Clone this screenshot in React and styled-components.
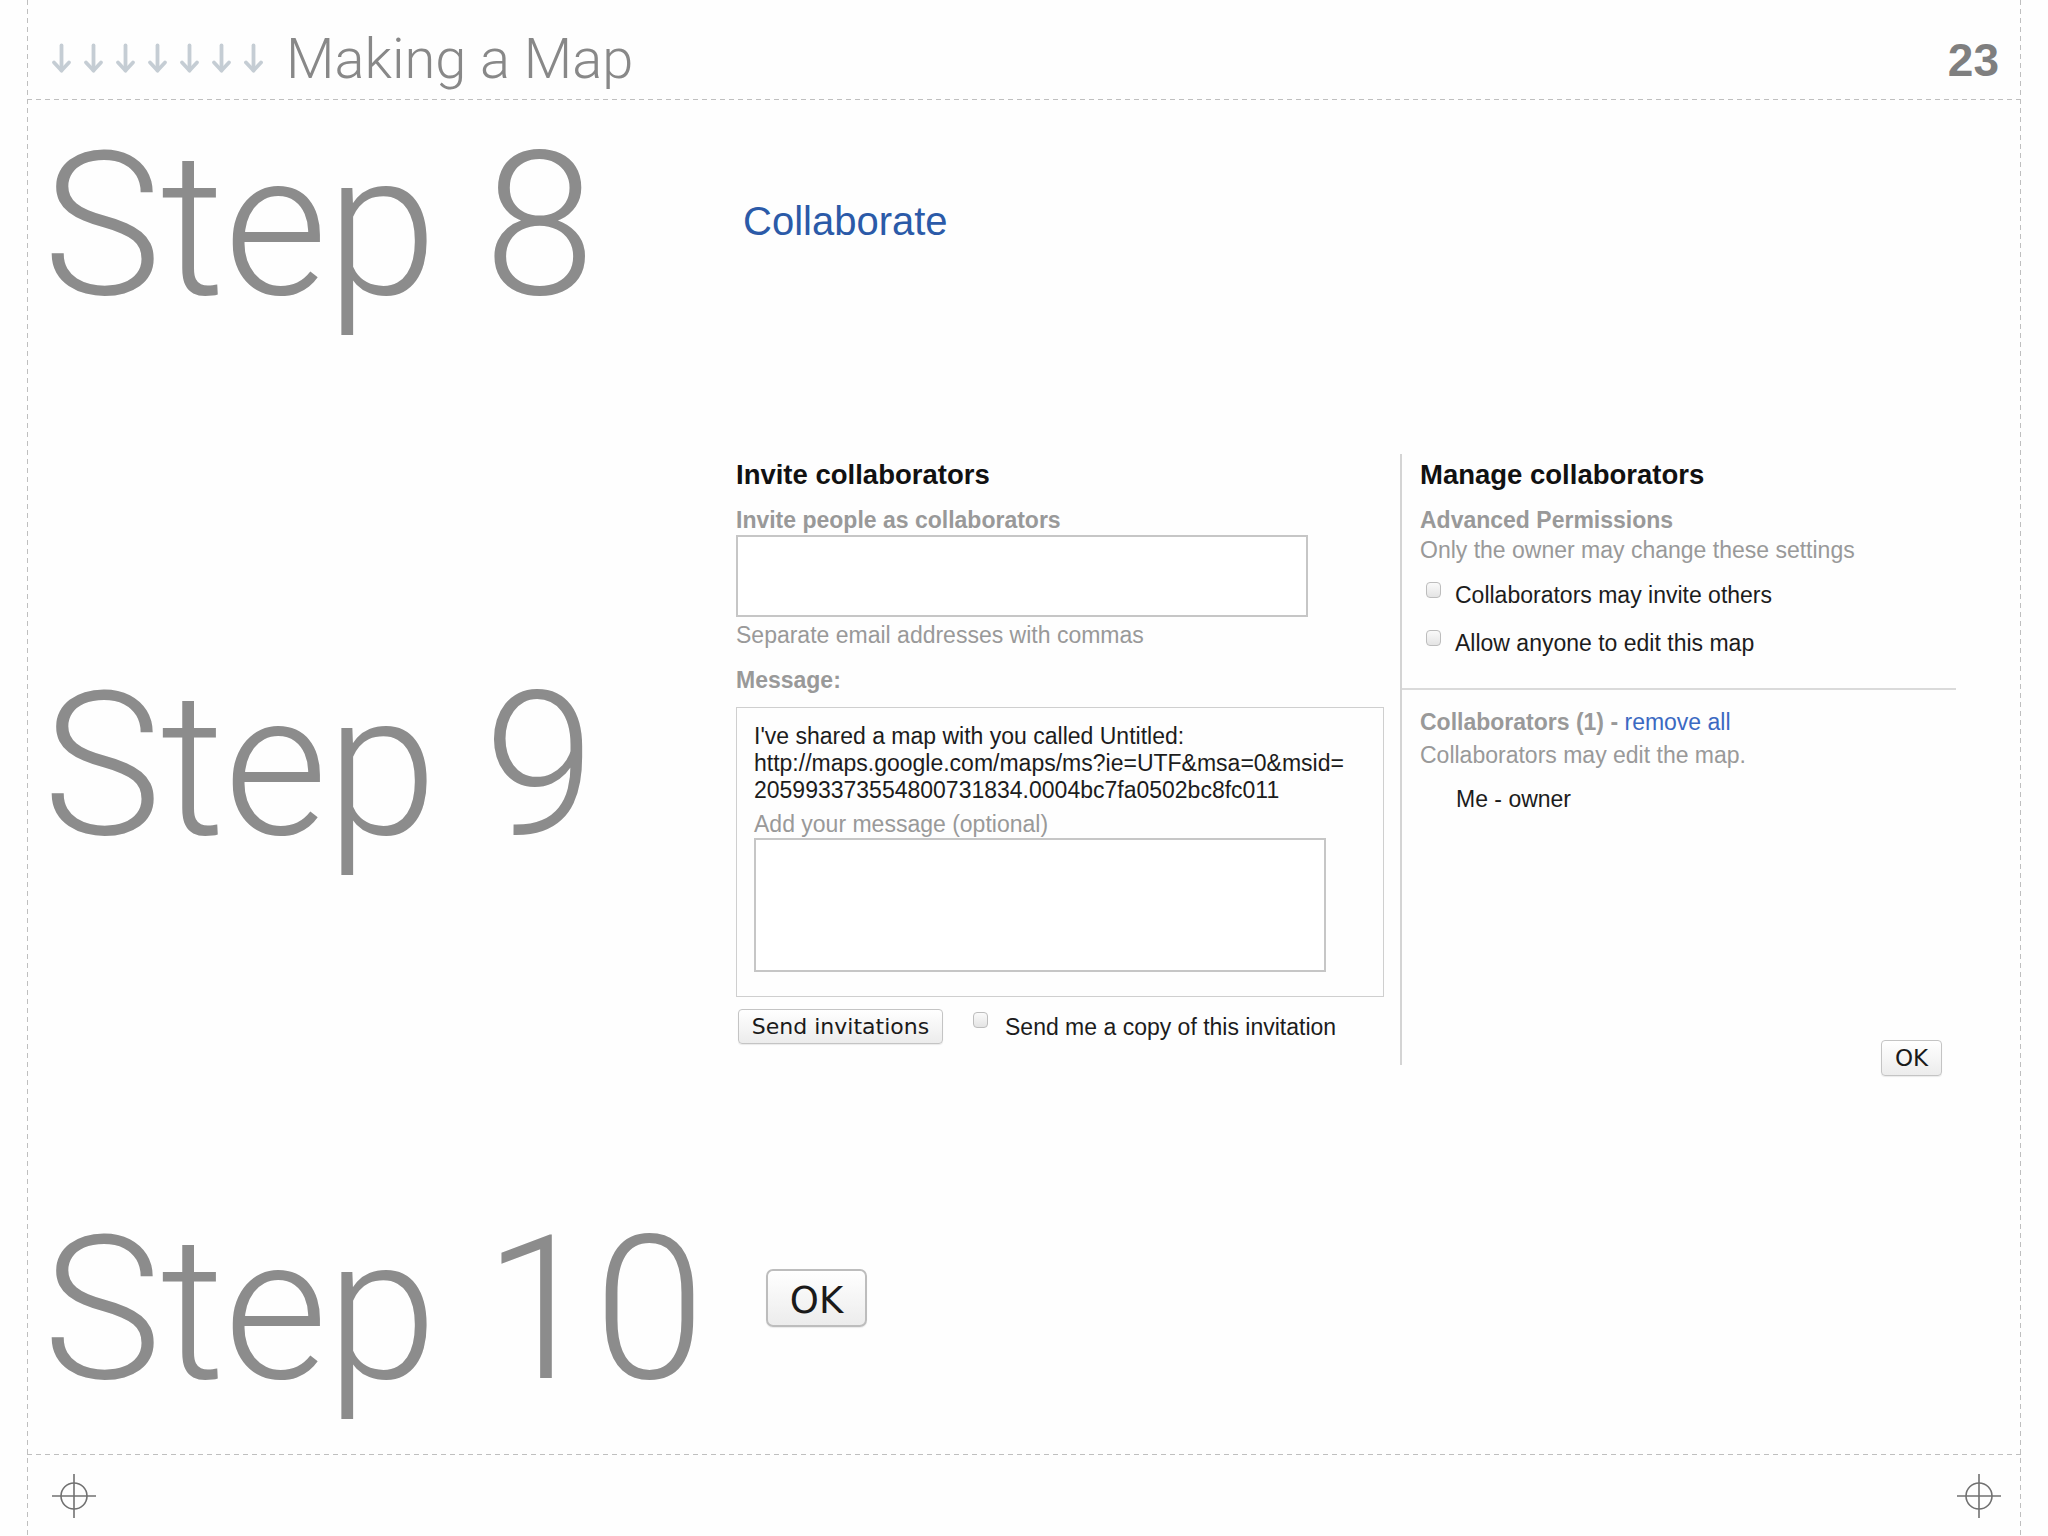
import React from "react";
import styled, { createGlobalStyle } from "styled-components";

const GlobalStyle = createGlobalStyle`
  html, body {
    margin: 0;
    padding: 0;
    background: #fefefe;
  }
  * {
    box-sizing: border-box;
  }
`;

const dashV = "repeating-linear-gradient(to bottom, #bfbfbf 0 5px, transparent 5px 9px)";
const dashH = "repeating-linear-gradient(to right, #bfbfbf 0 5px, transparent 5px 9px)";

const Page = styled.div`
  width: 2048px;
  height: 1536px;
  padding-left: 27px;
  background: #fefefe;
  overflow: hidden;
`;

const Frame = styled.div`
  width: 1994px;
  height: 100%;
  display: flex;
  flex-direction: column;
  background:
    ${dashV} left top / 1px 100% no-repeat,
    ${dashV} right top / 1px 100% no-repeat;
`;

const Header = styled.header`
  height: 100px;
  flex: none;
  display: flex;
  align-items: flex-end;
  padding: 0 22px 13px 24px;
  background: ${dashH} left bottom / 100% 1px no-repeat;
`;

const Arrows = styled.div`
  display: flex;
  gap: 11px;
  margin-bottom: 13px;
`;

const Title = styled.h1`
  margin: 0 0 0 22px;
  font-family: Roboto, "Open Sans", sans-serif;
  font-weight: 300;
  font-size: 56px;
  line-height: 1;
  color: #888888;
`;

const PageNum = styled.div`
  margin: 0 0 4px auto;
  font-family: "Liberation Sans", Arial, sans-serif;
  font-weight: 700;
  font-size: 46px;
  line-height: 1;
  color: #7f7f7f;
`;

const Body = styled.main`
  flex: none;
  height: 1355px;
  display: flex;
  flex-direction: column;
  padding-left: 12px;
  background: ${dashH} left bottom / 100% 1px no-repeat;
`;

const Row = styled.section`
  display: flex;
  align-items: flex-start;
  height: ${(p) => p.h}px;
  flex: none;
`;

const StepLabel = styled.div`
  width: 697px;
  flex: none;
  padding-left: 4px;
  margin-top: ${(p) => p.top}px;
  font-family: Roboto, "Open Sans", sans-serif;
  font-weight: 300;
  font-size: 200px;
  line-height: 1;
  letter-spacing: -1px;
  color: #8c8c8c;
  white-space: nowrap;
`;

const Collaborate = styled.h2`
  margin: 101px 0 0 7px;
  font-family: "Liberation Sans", Arial, sans-serif;
  font-weight: 400;
  font-size: 40px;
  line-height: 1;
  color: #2b5aa8;
`;

const Dialog = styled.div`
  margin-top: 14px;
  display: flex;
  align-items: flex-start;
  font-family: "Liberation Sans", Arial, sans-serif;
  font-size: 23px;
  line-height: 28px;
  color: #1c1c1c;
`;

const LeftPane = styled.div`
  width: 648px;
  padding-top: 5px;
  display: flex;
  flex-direction: column;
`;

const RightPane = styled.div`
  width: 556px;
  height: 611px;
  margin-left: 16px;
  border-left: 2px solid #d4d4d4;
  display: flex;
  flex-direction: column;
`;

const PaneSection = styled.div`
  padding-left: 18px;
  padding-top: ${(p) => p.top || 0}px;
  display: flex;
  flex-direction: column;
`;

const Heading = styled.h3`
  margin: 0;
  font-size: 27.5px;
  line-height: 32px;
  font-weight: 700;
  color: #111;
`;

const Label = styled.div`
  margin-top: ${(p) => p.top || 0}px;
  font-weight: ${(p) => (p.bold ? 700 : 400)};
  color: ${(p) => (p.dark ? "#1c1c1c" : "#999999")};
  padding-left: ${(p) => p.indent || 0}px;
  white-space: nowrap;
`;

const LinkText = styled.span`
  font-weight: 400;
  color: #3b69c2;
`;

const Field = styled.div`
  margin-top: ${(p) => p.top || 0}px;
  width: ${(p) => p.w}px;
  height: ${(p) => p.h}px;
  border: 2px solid #c6c6c6;
  background: #fff;
`;

const MessageBox = styled.div`
  margin-top: 13px;
  width: 648px;
  height: 290px;
  border: 1px solid #cfcfcf;
  padding: 15px 0 0 17px;
  display: flex;
  flex-direction: column;
`;

const MessageText = styled.div`
  line-height: 27px;
  color: #1c1c1c;
  white-space: pre;
`;

const ButtonRow = styled.div`
  margin-top: 12px;
  display: flex;
  align-items: center;
`;

const Button = styled.button`
  margin-left: ${(p) => p.ml || 0}px;
  width: ${(p) => p.w}px;
  height: ${(p) => p.h}px;
  padding: 0;
  border: 1px solid #c4c4c4;
  border-radius: 4px;
  background: linear-gradient(to bottom, #ffffff, #ececec);
  box-shadow: 0 1px 1px rgba(0, 0, 0, 0.08);
  font-family: "DejaVu Sans", Verdana, sans-serif;
  font-size: ${(p) => p.fs}px;
  color: #1a1a1a;
  display: flex;
  align-items: center;
  justify-content: center;
`;

const BigButton = styled(Button)`
  border: 2px solid #bdbdbd;
  border-radius: 7px;
  margin-top: 179px;
  padding-top: 4px;
`;

const Checkbox = styled.span`
  flex: none;
  display: inline-block;
  width: 15px;
  height: 16px;
  margin-left: ${(p) => p.ml || 0}px;
  margin-right: ${(p) => p.mr || 0}px;
  border: 1px solid #bdbdbd;
  border-radius: 4px;
  background: linear-gradient(to bottom, #fafafa, #e4e4e4);
  align-self: flex-start;
  margin-top: ${(p) => p.mt || 0}px;
`;

const CheckRow = styled.div`
  margin-top: ${(p) => p.top || 0}px;
  display: flex;
  align-items: center;
  color: #1c1c1c;
  white-space: nowrap;
`;

const Divider = styled.div`
  margin-top: 31px;
  height: 2px;
  background: #dadada;
`;

const OkBar = styled.div`
  margin-top: auto;
  margin-bottom: -11px;
  padding-right: 14px;
  display: flex;
  justify-content: flex-end;
`;

const Footer = styled.footer`
  flex: 1;
  display: flex;
  justify-content: space-between;
  align-items: flex-start;
  padding: 18px 19px 0 24px;
`;

function Arrow() {
  return (
    <svg width="21" height="31" viewBox="0 0 21 31">
      <g stroke="#c5cdd4" strokeWidth="3.8" strokeLinecap="round" strokeLinejoin="round" fill="none">
        <line x1="10.5" y1="2.5" x2="10.5" y2="27.5" />
        <polyline points="3,19.5 10.5,27.5 18,19.5" />
      </g>
    </svg>
  );
}

function Crosshair() {
  return (
    <svg width="46" height="46" viewBox="0 0 46 46">
      <g stroke="#717171" strokeWidth="1.6" fill="none">
        <circle cx="23" cy="23" r="13" />
        <line x1="1" y1="23" x2="45" y2="23" />
        <line x1="23" y1="1" x2="23" y2="45" />
      </g>
    </svg>
  );
}

const message = [
  "I've shared a map with you called Untitled:",
  "http://maps.google.com/maps/ms?ie=UTF&msa=0&msid=",
  "205993373554800731834.0004bc7fa0502bc8fc011",
];

export default function App() {
  return (
    <Page>
      <GlobalStyle />
      <Frame>
        <Header>
          <Arrows>
            {Array.from({ length: 7 }).map((_, i) => (
              <Arrow key={i} />
            ))}
          </Arrows>
          <Title>Making a Map</Title>
          <PageNum>23</PageNum>
        </Header>

        <Body>
          <Row h={340}>
            <StepLabel top={26}>Step 8</StepLabel>
            <Collaborate>Collaborate</Collaborate>
          </Row>

          <Row h={650}>
            <StepLabel top={226}>Step 9</StepLabel>
            <Dialog>
              <LeftPane>
                <Heading>Invite collaborators</Heading>
                <Label bold top={15}>Invite people as collaborators</Label>
                <Field w={572} h={82} top={1} />
                <Label top={4}>Separate email addresses with commas</Label>
                <Label bold top={17}>Message:</Label>
                <MessageBox>
                  <MessageText>{message.join("\n")}</MessageText>
                  <Label top={6}>Add your message (optional)</Label>
                  <Field w={572} h={134} />
                </MessageBox>
                <ButtonRow>
                  <Button ml={2} w={205} h={35} fs={22}>Send invitations</Button>
                  <Checkbox ml={30} mr={17} mt={3} />
                  <Label dark>Send me a copy of this invitation</Label>
                </ButtonRow>
              </LeftPane>

              <RightPane>
                <PaneSection top={5}>
                  <Heading>Manage collaborators</Heading>
                  <Label bold top={15}>Advanced Permissions</Label>
                  <Label top={2}>Only the owner may change these settings</Label>
                  <CheckRow top={17}>
                    <Checkbox ml={6} mr={14} mt={1} />
                    Collaborators may invite others
                  </CheckRow>
                  <CheckRow top={20}>
                    <Checkbox ml={6} mr={14} mt={1} />
                    Allow anyone to edit this map
                  </CheckRow>
                </PaneSection>
                <Divider />
                <PaneSection top={18}>
                  <Label bold>
                    Collaborators (1) - <LinkText>remove all</LinkText>
                  </Label>
                  <Label top={5}>Collaborators may edit the map.</Label>
                  <Label dark top={16} indent={36}>Me - owner</Label>
                </PaneSection>
                <OkBar>
                  <Button w={61} h={36} fs={23}>OK</Button>
                </OkBar>
              </RightPane>
            </Dialog>
          </Row>

          <Row h={365}>
            <StepLabel top={120}>Step 10</StepLabel>
            <BigButton ml={30} w={101} h={58} fs={37}>OK</BigButton>
          </Row>
        </Body>

        <Footer>
          <Crosshair />
          <Crosshair />
        </Footer>
      </Frame>
    </Page>
  );
}
